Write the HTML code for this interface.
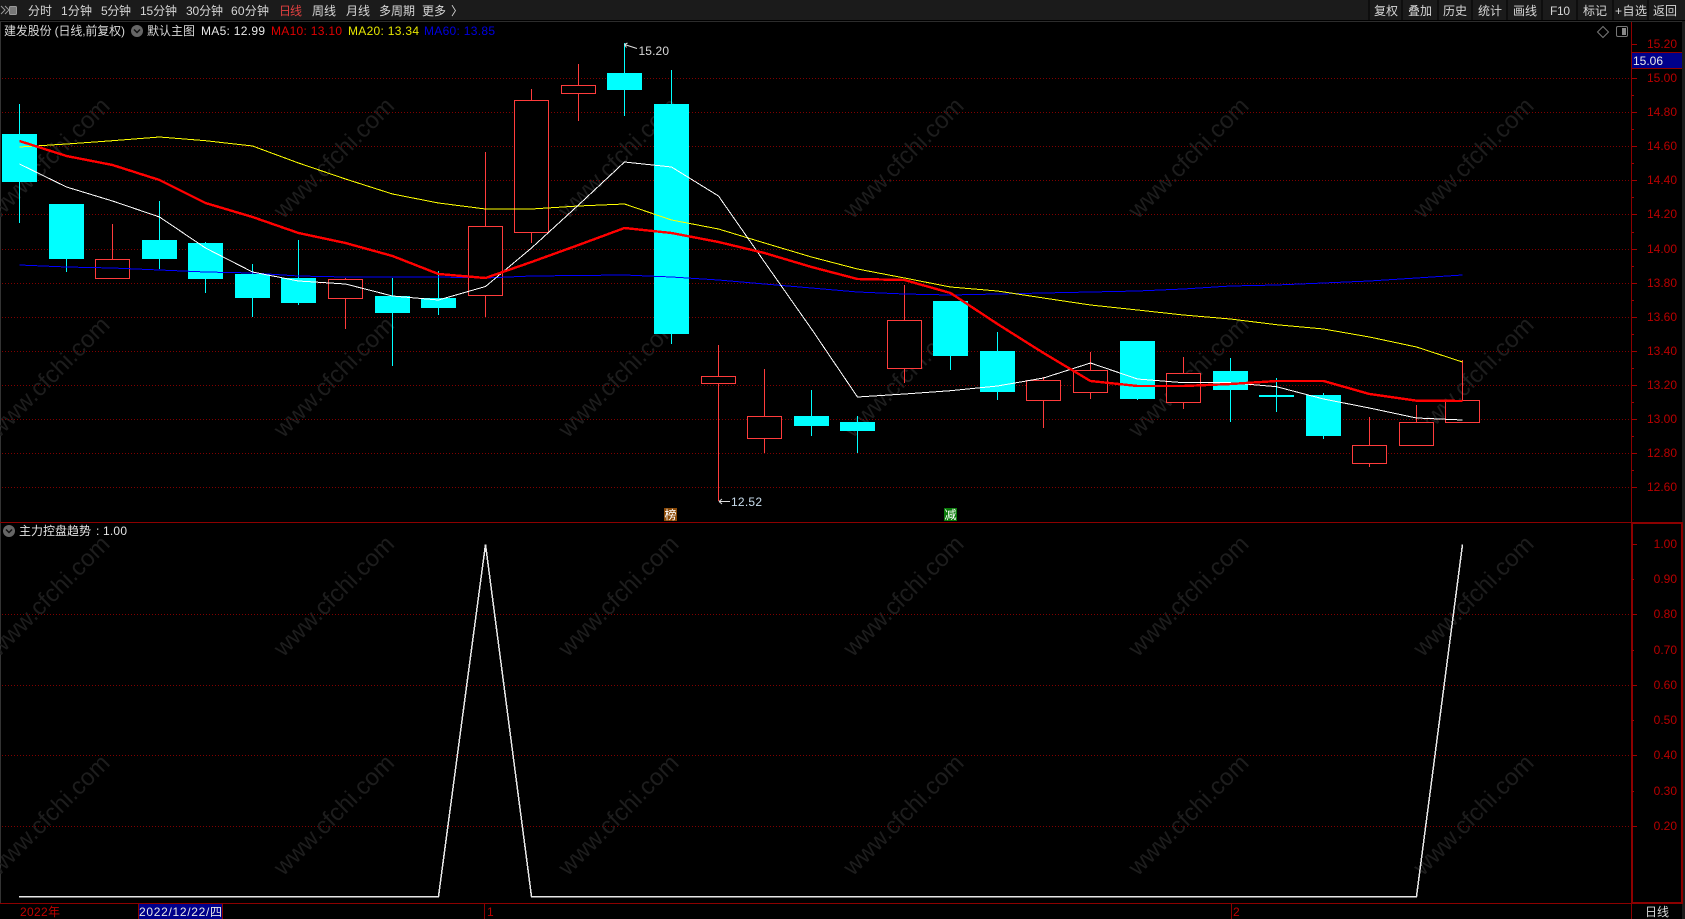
<!DOCTYPE html>
<html><head><meta charset="utf-8"><title>建发股份</title>
<style>
html,body{margin:0;padding:0;background:#000;width:1685px;height:919px;overflow:hidden}
svg{display:block;position:absolute;left:0;top:0}
text{font-family:"Liberation Sans","Noto Sans CJK SC",sans-serif;font-size:12px}
.t{fill:#d6d6d6}
.ax{fill:#b80000;text-anchor:end}
.wm{fill:#1d1d1d}
.wm text{font-size:24px}
.g{stroke:#800000;stroke-width:1;stroke-dasharray:1 2;fill:none;shape-rendering:crispEdges}
.tk{stroke:#a00000;stroke-width:1;fill:none;shape-rendering:crispEdges}
.c{fill:#0ff;stroke:none;shape-rendering:crispEdges}
.cw{stroke:#0ff;stroke-width:1;fill:none;shape-rendering:crispEdges}
.r{stroke:#ff3c3c;stroke-width:1;fill:#000;shape-rendering:crispEdges}
.rw{stroke:#ff3c3c;stroke-width:1;fill:none;shape-rendering:crispEdges}
.l{fill:none;shape-rendering:crispEdges}
</style></head><body>
<svg width="1685" height="919" viewBox="0 0 1685 919" xmlns="http://www.w3.org/2000/svg">
<rect width="1685" height="919" fill="#000"/>
<!-- top bar -->
<rect x="0" y="0" width="1685" height="20" fill="#1b1b1b"/>
<rect x="0" y="20" width="1685" height="1" fill="#000"/>
<rect x="0" y="21" width="1682" height="1" fill="#2c2c2c"/>
<rect x="0" y="22" width="1" height="881" fill="#333"/>
<rect x="1682" y="21" width="3" height="898" fill="#1b1b1b"/>
<!-- top-left icon -->
<path d="M1 6l4 4-4 4M5 6l4 4-4 4" stroke="#9a9a9a" fill="none" stroke-width="1"/>
<rect x="9.5" y="6.5" width="7" height="8" rx="1" fill="#777" stroke="#999"/>
<g class="t">
<text x="28" y="15" textLength="24">分时</text>
<text x="61" y="15" textLength="31">1分钟</text>
<text x="101" y="15" textLength="30">5分钟</text>
<text x="140" y="15" textLength="37">15分钟</text>
<text x="186" y="15" textLength="37">30分钟</text>
<text x="231" y="15" textLength="38">60分钟</text>
<text x="279" y="15" textLength="23" style="fill:#e04040">日线</text>
<text x="312" y="15" textLength="24">周线</text>
<text x="346" y="15" textLength="24">月线</text>
<text x="379" y="15" textLength="36">多周期</text>
<text x="422" y="15" textLength="24">更多</text>
<text x="451" y="15">〉</text>
<text x="1374" y="15" textLength="24">复权</text>
<text x="1408" y="15" textLength="24">叠加</text>
<text x="1443" y="15" textLength="24">历史</text>
<text x="1478" y="15" textLength="24">统计</text>
<text x="1513" y="15" textLength="24">画线</text>
<text x="1550" y="15" textLength="20">F10</text>
<text x="1583" y="15" textLength="24">标记</text>
<text x="1615" y="15" textLength="32">+自选</text>
<text x="1653" y="15" textLength="24">返回</text>
</g>
<path d="M1369 0V20M1402 0V20M1438 0V20M1472 0V20M1507 0V20M1542 0V20M1577 0V20M1613 0V20M1648 0V20" stroke="#000" stroke-width="1" shape-rendering="crispEdges"/>
<!-- watermark -->
<g class="wm" transform="translate(3 5)">
<text transform="translate(52 158.5) rotate(-45)" text-anchor="middle">www.cfchi.com</text>
<text transform="translate(336.5 158.5) rotate(-45)" text-anchor="middle">www.cfchi.com</text>
<text transform="translate(621 158.5) rotate(-45)" text-anchor="middle">www.cfchi.com</text>
<text transform="translate(906 158.5) rotate(-45)" text-anchor="middle">www.cfchi.com</text>
<text transform="translate(1191 158.5) rotate(-45)" text-anchor="middle">www.cfchi.com</text>
<text transform="translate(1476 158.5) rotate(-45)" text-anchor="middle">www.cfchi.com</text>
<text transform="translate(52 377.5) rotate(-45)" text-anchor="middle">www.cfchi.com</text>
<text transform="translate(336.5 377.5) rotate(-45)" text-anchor="middle">www.cfchi.com</text>
<text transform="translate(621 377.5) rotate(-45)" text-anchor="middle">www.cfchi.com</text>
<text transform="translate(906 377.5) rotate(-45)" text-anchor="middle">www.cfchi.com</text>
<text transform="translate(1191 377.5) rotate(-45)" text-anchor="middle">www.cfchi.com</text>
<text transform="translate(1476 377.5) rotate(-45)" text-anchor="middle">www.cfchi.com</text>
<text transform="translate(52 596.5) rotate(-45)" text-anchor="middle">www.cfchi.com</text>
<text transform="translate(336.5 596.5) rotate(-45)" text-anchor="middle">www.cfchi.com</text>
<text transform="translate(621 596.5) rotate(-45)" text-anchor="middle">www.cfchi.com</text>
<text transform="translate(906 596.5) rotate(-45)" text-anchor="middle">www.cfchi.com</text>
<text transform="translate(1191 596.5) rotate(-45)" text-anchor="middle">www.cfchi.com</text>
<text transform="translate(1476 596.5) rotate(-45)" text-anchor="middle">www.cfchi.com</text>
<text transform="translate(52 815.5) rotate(-45)" text-anchor="middle">www.cfchi.com</text>
<text transform="translate(336.5 815.5) rotate(-45)" text-anchor="middle">www.cfchi.com</text>
<text transform="translate(621 815.5) rotate(-45)" text-anchor="middle">www.cfchi.com</text>
<text transform="translate(906 815.5) rotate(-45)" text-anchor="middle">www.cfchi.com</text>
<text transform="translate(1191 815.5) rotate(-45)" text-anchor="middle">www.cfchi.com</text>
<text transform="translate(1476 815.5) rotate(-45)" text-anchor="middle">www.cfchi.com</text>
</g>
<!-- grid -->
<path class="g" d="M2 78.5H1631M2 112.5H1631M2 146.5H1631M2 180.5H1631M2 214.5H1631M2 249.5H1631M2 283.5H1631M2 317.5H1631M2 351.5H1631M2 385.5H1631M2 419.5H1631M2 453.5H1631M2 487.5H1631"/>
<path class="g" d="M2 614.5H1631M2 685.5H1631M2 755.5H1631M2 826.5H1631"/>
<!-- candles -->
<g>
<path class="cw" d="M19.5 104V223M66.5 204V272M159.5 201V269M205.5 242V293M252.5 264V317M298.5 240V305M392.5 278V366M438.5 271V315M624.5 43V116M671.5 70V344M811.5 390V436M857.5 416V453M950.5 301V370M997.5 332V400M1137.5 341V400M1230.5 358V422M1276.5 378V412M1323.5 393V439"/>
<g class="c">
<rect x="2" y="134" width="35" height="48"/>
<rect x="49" y="204" width="35" height="55"/>
<rect x="142" y="240" width="35" height="19"/>
<rect x="188" y="243" width="35" height="36"/>
<rect x="235" y="274" width="35" height="24"/>
<rect x="281" y="278" width="35" height="25"/>
<rect x="375" y="296" width="35" height="17"/>
<rect x="421" y="298" width="35" height="10"/>
<rect x="607" y="73" width="35" height="17"/>
<rect x="654" y="104" width="35" height="230"/>
<rect x="794" y="416" width="35" height="10"/>
<rect x="840" y="422" width="35" height="9"/>
<rect x="933" y="301" width="35" height="55"/>
<rect x="980" y="351" width="35" height="41"/>
<rect x="1120" y="341" width="35" height="58"/>
<rect x="1213" y="371" width="35" height="19"/>
<rect x="1259" y="395" width="35" height="2"/>
<rect x="1306" y="395" width="35" height="41"/>
</g>
<path class="rw" d="M112.5 224V259M345.5 278V279M345.5 299V329M485.5 152V226M485.5 296V317M531.5 89V100M531.5 232V243M578.5 64V85M578.5 93V121M718.5 345V376M718.5 384V501M764.5 369V416M764.5 439V453M904.5 285V320M904.5 369V383M1043.5 377V380M1043.5 401V428M1090.5 352V370M1090.5 393V399M1183.5 357V373M1183.5 403V409M1369.5 417V445M1369.5 464V467M1416.5 405V422M1462.5 360V400"/>
<g class="r">
<rect x="95.5" y="259.5" width="34" height="19"/>
<rect x="328.5" y="279.5" width="34" height="19"/>
<rect x="468.5" y="226.5" width="34" height="69"/>
<rect x="514.5" y="100.5" width="34" height="132"/>
<rect x="561.5" y="85.5" width="34" height="8"/>
<rect x="701.5" y="376.5" width="34" height="7"/>
<rect x="747.5" y="416.5" width="34" height="22"/>
<rect x="887.5" y="320.5" width="34" height="48"/>
<rect x="1026.5" y="380.5" width="34" height="20"/>
<rect x="1073.5" y="370.5" width="34" height="22"/>
<rect x="1166.5" y="373.5" width="34" height="29"/>
<rect x="1352.5" y="445.5" width="34" height="18"/>
<rect x="1399.5" y="422.5" width="34" height="23"/>
<rect x="1445.5" y="400.5" width="34" height="22"/>
</g>
</g>
<!-- MA lines -->
<polyline class="l" stroke="#0000ff" stroke-width="1" points="19.5,265 66.5,267 112.5,268 159.5,270 205.5,272 252.5,273 298.5,276 345.5,277 392.5,277 438.5,277 485.5,278 531.5,276 578.5,275.5 624.5,275 671.5,277 718.5,280 764.5,284 811.5,288 857.5,292 904.5,294 950.5,295 997.5,294 1043.5,293 1090.5,292 1137.5,291 1183.5,289 1230.5,286 1276.5,285 1323.5,283 1369.5,281 1416.5,278 1462.5,275"/>
<polyline class="l" stroke="#ffff00" stroke-width="1" points="19.5,147 66.5,144 112.5,140.7 159.5,137 205.5,140.7 252.5,146 298.5,163 345.5,179 392.5,194 438.5,203 485.5,209 531.5,209 578.5,206 624.5,204 671.5,220 718.5,229 764.5,243 811.5,257 857.5,269 904.5,278 950.5,287 997.5,291 1043.5,298 1090.5,305 1137.5,310 1183.5,315 1230.5,319 1276.5,324.7 1323.5,329 1369.5,337 1416.5,347 1462.5,362"/>
<polyline class="l" stroke="#ffffff" stroke-width="1" points="19.5,164 66.5,187 112.5,201 159.5,217 205.5,248 252.5,272 298.5,281 345.5,284 392.5,296 438.5,300 485.5,286.5 531.5,248 578.5,205 624.5,162 671.5,167 718.5,196 764.5,262 811.5,329 857.5,397 904.5,394 950.5,390.7 997.5,386 1043.5,378 1090.5,363 1137.5,379 1183.5,382.7 1230.5,382.7 1276.5,386.7 1323.5,399 1369.5,408 1416.5,418 1462.5,420"/>
<polyline class="l" stroke="#ff0000" stroke-width="2.4" points="19.5,141 66.5,156 112.5,165 159.5,180 205.5,203 252.5,217 298.5,233 345.5,243 392.5,256 438.5,274 485.5,278 531.5,262 578.5,245 624.5,228 671.5,233 718.5,242 764.5,253 811.5,267 857.5,279 904.5,280 950.5,293 997.5,324 1043.5,353 1090.5,381 1137.5,386 1183.5,386 1230.5,384 1276.5,381 1323.5,381 1369.5,394 1416.5,400.7 1462.5,401"/>
<!-- high/low labels -->
<path d="M624.5 44.5L637 48.5M624.5 44.5l3 -1.5M624.5 44.5l2 3" stroke="#ddd" fill="none" stroke-width="1"/>
<text x="638.5" y="55" textLength="30.5" fill="#d8d8d8">15.20</text>
<path d="M719 501.5H730M719 501.5l3-2.5M719 501.5l3 2.5" stroke="#ddd" fill="none" stroke-width="1"/>
<text x="731" y="506" textLength="31" fill="#c8dcec">12.52</text>
<!-- markers -->
<rect x="664" y="508" width="13" height="13" fill="#8a4a08"/>
<text x="664.5" y="519" fill="#fff">榜</text>
<rect x="944" y="508" width="13" height="13" fill="#0a7a0a"/>
<text x="944.5" y="519" fill="#fff">减</text>
<!-- header line 2 -->
<text x="4" y="35" textLength="121" fill="#d8d8d8">建发股份 (日线,前复权)</text>
<circle cx="137" cy="31" r="6" fill="#666"/>
<path d="M134 29.5l3 3 3-3" stroke="#111" stroke-width="1.5" fill="none"/>
<text x="147" y="35" textLength="48" fill="#d8d8d8">默认主图</text>
<text x="201" y="35" textLength="64" fill="#e8e8e8">MA5: 12.99</text>
<text x="271" y="35" textLength="71" fill="#e00000">MA10: 13.10</text>
<text x="348" y="35" textLength="71" fill="#e6e600">MA20: 13.34</text>
<text x="424" y="35" textLength="71" fill="#0000e0">MA60: 13.85</text>
<!-- top right icons -->
<path d="M1603 26.5l5.5 5.5-5.5 5.5-5.5-5.5z" fill="none" stroke="#777"/>
<rect x="1616.5" y="26.5" width="11" height="10" rx="1.5" fill="none" stroke="#777"/>
<rect x="1622" y="28" width="4" height="7" fill="#888"/>
<!-- separators -->
<rect x="0" y="522" width="1632" height="1" fill="#8c0000"/>
<rect x="1631" y="22" width="1" height="500" fill="#8c0000"/>
<rect x="1631" y="522" width="2" height="381" fill="#8c0000"/>
<rect x="0" y="903" width="1682" height="1" fill="#8c0000"/>
<rect x="1632" y="522" width="50" height="2" fill="#8c0000"/>
<rect x="1632" y="902" width="50" height="2" fill="#8c0000"/>
<rect x="1681" y="522" width="2" height="382" fill="#8c0000"/>
<!-- axis ticks -->
<path class="tk" d="M1632 44.5h5M1632 78.5h5M1632 112.5h5M1632 146.5h5M1632 180.5h5M1632 214.5h5M1632 249.5h5M1632 283.5h5M1632 317.5h5M1632 351.5h5M1632 385.5h5M1632 419.5h5M1632 453.5h5M1632 487.5h5M1632 95.5h2M1632 129.5h2M1632 163.5h2M1632 197.5h2M1632 232.5h2M1632 266.5h2M1632 300.5h2M1632 334.5h2M1632 368.5h2M1632 402.5h2M1632 436.5h2M1632 470.5h2M1632 544.5h5M1632 579.5h2M1632 614.5h5M1632 650.5h2M1632 685.5h5M1632 720.5h2M1632 755.5h5M1632 791.5h2M1632 826.5h5"/>
<rect x="1632" y="52" width="50" height="17" fill="#00008b"/>
<path d="M1632 52.5H1682M1632 68.5H1682" stroke="#8c0000" stroke-width="1"/>
<text x="1633" y="65" textLength="30" fill="#e8e8e8">15.06</text>
<g class="ax">
<text x="1677" y="48">15.20</text>
<text x="1677" y="82">15.00</text>
<text x="1677" y="116">14.80</text>
<text x="1677" y="150">14.60</text>
<text x="1677" y="184">14.40</text>
<text x="1677" y="218">14.20</text>
<text x="1677" y="253">14.00</text>
<text x="1677" y="287">13.80</text>
<text x="1677" y="321">13.60</text>
<text x="1677" y="355">13.40</text>
<text x="1677" y="389">13.20</text>
<text x="1677" y="423">13.00</text>
<text x="1677" y="457">12.80</text>
<text x="1677" y="491">12.60</text>
<text x="1677" y="548">1.00</text>
<text x="1677" y="583">0.90</text>
<text x="1677" y="618">0.80</text>
<text x="1677" y="654">0.70</text>
<text x="1677" y="689">0.60</text>
<text x="1677" y="724">0.50</text>
<text x="1677" y="759">0.40</text>
<text x="1677" y="795">0.30</text>
<text x="1677" y="830">0.20</text>
</g>
<!-- lower panel -->
<circle cx="9" cy="531" r="6" fill="#666"/>
<path d="M6 529.5l3 3 3-3" stroke="#111" stroke-width="1.5" fill="none"/>
<text x="19" y="535" textLength="72" fill="#e4e4e4">主力控盘趋势</text>
<text x="96" y="535" fill="#e4e4e4">:</text>
<text x="103" y="535" textLength="24" fill="#e4e4e4">1.00</text>
<polyline class="l" stroke="#e8e8e8" stroke-width="1.5" points="19,896.5 438.5,896.5 485.5,544.5 531.5,896.5 1416.5,896.5 1462.5,544.5"/>
<!-- bottom axis -->
<text x="20" y="916" textLength="40" fill="#c00000">2022年</text>
<rect x="138" y="904" width="84" height="15" fill="#00008b"/>
<path d="M138.5 904V919M222.5 904V919M484.5 904V919M1231.5 904V919M1631.5 904V919" stroke="#8c0000" stroke-width="1"/>
<text x="139" y="916" textLength="83" fill="#e8e8e8">2022/12/22/四</text>
<text x="487" y="916" fill="#c00000">1</text>
<text x="1233" y="916" fill="#c00000">2</text>
<text x="1645" y="916" textLength="24" fill="#d8d8d8">日线</text>
</svg>
</body></html>
